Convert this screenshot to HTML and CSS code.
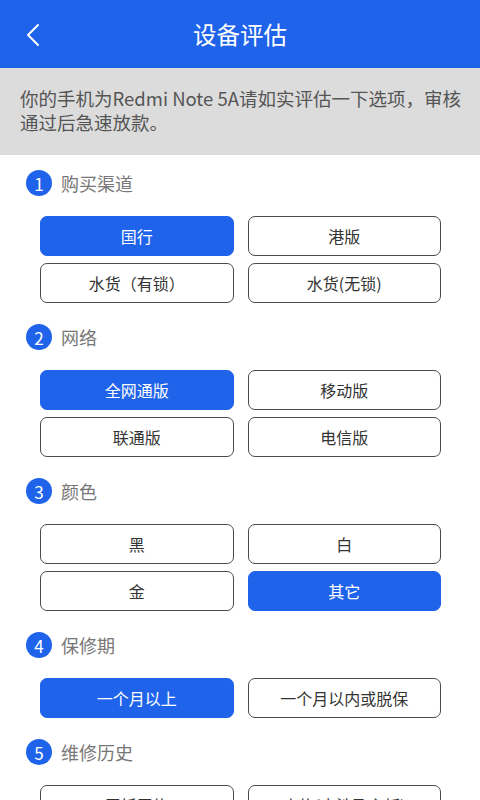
FILE: index.html
```html
<!DOCTYPE html>
<html lang="zh">
<head>
<meta charset="utf-8">
<title>设备评估</title>
<link rel="stylesheet" href="styles.css">
</head>
<body>
<header class="topbar">
  <span class="back"><svg width="14" height="24" viewBox="0 0 14 24"><path d="M12 2 L2 12 L12 22" fill="none" stroke="#fff" stroke-width="2" stroke-linecap="round" stroke-linejoin="round"/></svg></span>
  <h1 class="title">设备评估</h1>
</header>
<div class="notice">你的手机为Redmi Note 5A请如实评估一下选项，审核通过后急速放款。</div>

<section class="sec">
  <div class="sec-head"><span class="num">1</span><span class="sec-title">购买渠道</span></div>
  <div class="opts">
    <div class="opt on">国行</div>
    <div class="opt">港版</div>
    <div class="opt">水货（有锁）</div>
    <div class="opt">水货(无锁)</div>
  </div>
</section>

<section class="sec">
  <div class="sec-head"><span class="num">2</span><span class="sec-title">网络</span></div>
  <div class="opts">
    <div class="opt on">全网通版</div>
    <div class="opt">移动版</div>
    <div class="opt">联通版</div>
    <div class="opt">电信版</div>
  </div>
</section>

<section class="sec">
  <div class="sec-head"><span class="num">3</span><span class="sec-title">颜色</span></div>
  <div class="opts">
    <div class="opt">黑</div>
    <div class="opt">白</div>
    <div class="opt">金</div>
    <div class="opt on">其它</div>
  </div>
</section>

<section class="sec">
  <div class="sec-head"><span class="num">4</span><span class="sec-title">保修期</span></div>
  <div class="opts">
    <div class="opt on">一个月以上</div>
    <div class="opt">一个月以内或脱保</div>
  </div>
</section>

<section class="sec">
  <div class="sec-head"><span class="num">5</span><span class="sec-title">维修历史</span></div>
  <div class="opts">
    <div class="opt">无拆无修</div>
    <div class="opt">小修(未涉及主板)</div>
  </div>
</section>
</body>
</html>
```
FILE: styles.css
```css
* { box-sizing: border-box; }
html, body { margin: 0; padding: 0; }
body {
  width: 480px;
  background: #fff;
  font-family: "Noto Sans CJK SC", "Noto Sans", sans-serif;
  overflow: hidden;
  height: 800px;
}
.topbar {
  height: 68px;
  background: #1f63ea;
  display: flex;
  align-items: center;
  justify-content: center;
  position: relative;
}
.back {
  position: absolute;
  left: 26px;
  top: 23px;
  display: flex;
}
.title {
  margin: 0;
  color: #fff;
  font-size: 23.5px;
  font-weight: 400;
  line-height: 1;
  margin-top: 2px;
}
.notice {
  background: #dcdcdc;
  height: 87px;
  padding: 18px 16px 0 20px;
  color: #555;
  font-size: 18.5px;
  line-height: 24px;
}
.sec {
  padding: 15px 0 6px;
}
.sec-head {
  display: flex;
  align-items: center;
  height: 26px;
  padding-left: 26px;
}
.num {
  width: 26px;
  height: 26px;
  border-radius: 50%;
  background: #1f63ea;
  color: #fff;
  font-size: 17px;
  display: flex;
  align-items: center;
  justify-content: center;
  line-height: 1;
}
.sec-title {
  margin-left: 9px;
  font-size: 18px;
  color: #777;
  line-height: 1;
}
.opts {
  margin: 20px 39px 0 40px;
  display: grid;
  grid-template-columns: 1fr 1fr;
  column-gap: 14px;
  row-gap: 7px;
}
.opt {
  height: 40px;
  border: 1.5px solid #4a4a4a;
  border-radius: 7px;
  display: flex;
  align-items: center;
  justify-content: center;
  font-size: 16px;
  color: #333;
  background: #fff;
}
.opt.on {
  background: #1f63ea;
  border-color: #1f63ea;
  color: #fff;
}
```
